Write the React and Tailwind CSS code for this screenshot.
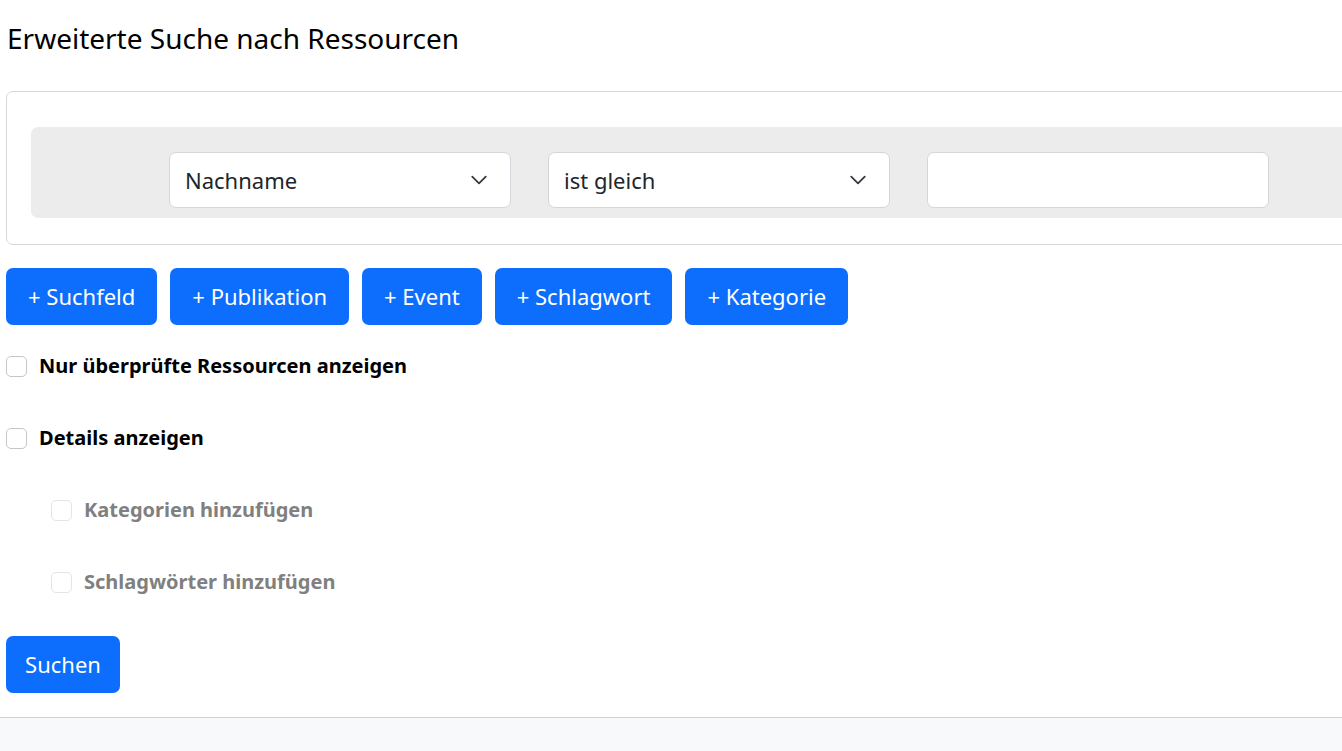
import React from "react";

const fieldBox =
  "h-[56px] w-[342px] rounded-[7px] border border-[#d3d6da] bg-white text-[22px] text-[#212529]";

const Select = ({ value }) => (
  <div className={`${fieldBox} flex items-center justify-between pl-[15px] pr-[22px]`}>
    <span>{value}</span>
    <svg width="18" height="18" viewBox="0 0 16 16" fill="none">
      <path
        d="M2 5l6 6 6-6"
        stroke="#343a40"
        strokeWidth="1.6"
        strokeLinecap="round"
        strokeLinejoin="round"
      />
    </svg>
  </div>
);

const Check = ({ label, disabled, indent }) => (
  <label
    className={`flex items-center gap-[12px] h-[24px] ${indent ? "pl-[45px]" : ""}`}
  >
    <span
      className={`block w-[21px] h-[21px] rounded-[5px] border bg-white ${
        disabled ? "border-[#e4e4e4]" : "border-[#c4c7ca]"
      }`}
    />
    <span
      className={`text-[20px] font-bold ${
        disabled ? "text-[#808080]" : "text-black"
      }`}
    >
      {label}
    </span>
  </label>
);

export default function App() {
  const adds = ["Suchfeld", "Publikation", "Event", "Schlagwort", "Kategorie"];

  return (
    <div
      className="w-[1342px] h-[751px] overflow-hidden bg-white flex flex-col"
      style={{ fontFamily: '"Noto Sans", "Open Sans", sans-serif' }}
    >
      <main className="flex-1 pl-[6px]">
        <h1 className="pt-[18px] pl-[1px] text-[28px] leading-[40px] text-black">
          Erweiterte Suche nach Ressourcen
        </h1>

        {/* Suchfelder */}
        <div className="mt-[33px] w-[1400px] h-[154px] rounded-[7px] border border-[#d6d8db] pt-[35px] pl-[24px]">
          <div className="h-[91px] rounded-[7px] bg-[#ececec] pt-[25px] pl-[138px] flex gap-[37px]">
            <Select value="Nachname" />
            <Select value="ist gleich" />
            <div className={fieldBox} />
          </div>
        </div>

        {/* Hinzufügen */}
        <div className="mt-[23px] flex gap-[13px]">
          {adds.map((a) => (
            <button
              key={a}
              className="h-[57px] px-[22px] rounded-[7px] bg-[#0d6efd] text-white text-[22px]"
            >
              + {a}
            </button>
          ))}
        </div>

        {/* Optionen */}
        <div className="mt-[29px] flex flex-col gap-[48px]">
          <Check label="Nur überprüfte Ressourcen anzeigen" />
          <Check label="Details anzeigen" />
          <Check label="Kategorien hinzufügen" disabled indent />
          <Check label="Schlagwörter hinzufügen" disabled indent />
        </div>

        <button className="mt-[42px] h-[57px] w-[114px] rounded-[7px] bg-[#0d6efd] text-white text-[22px]">
          Suchen
        </button>
      </main>

      <footer className="h-[34px] border-t border-[#d0d0d0] bg-[#f8f9fa]" />
    </div>
  );
}
